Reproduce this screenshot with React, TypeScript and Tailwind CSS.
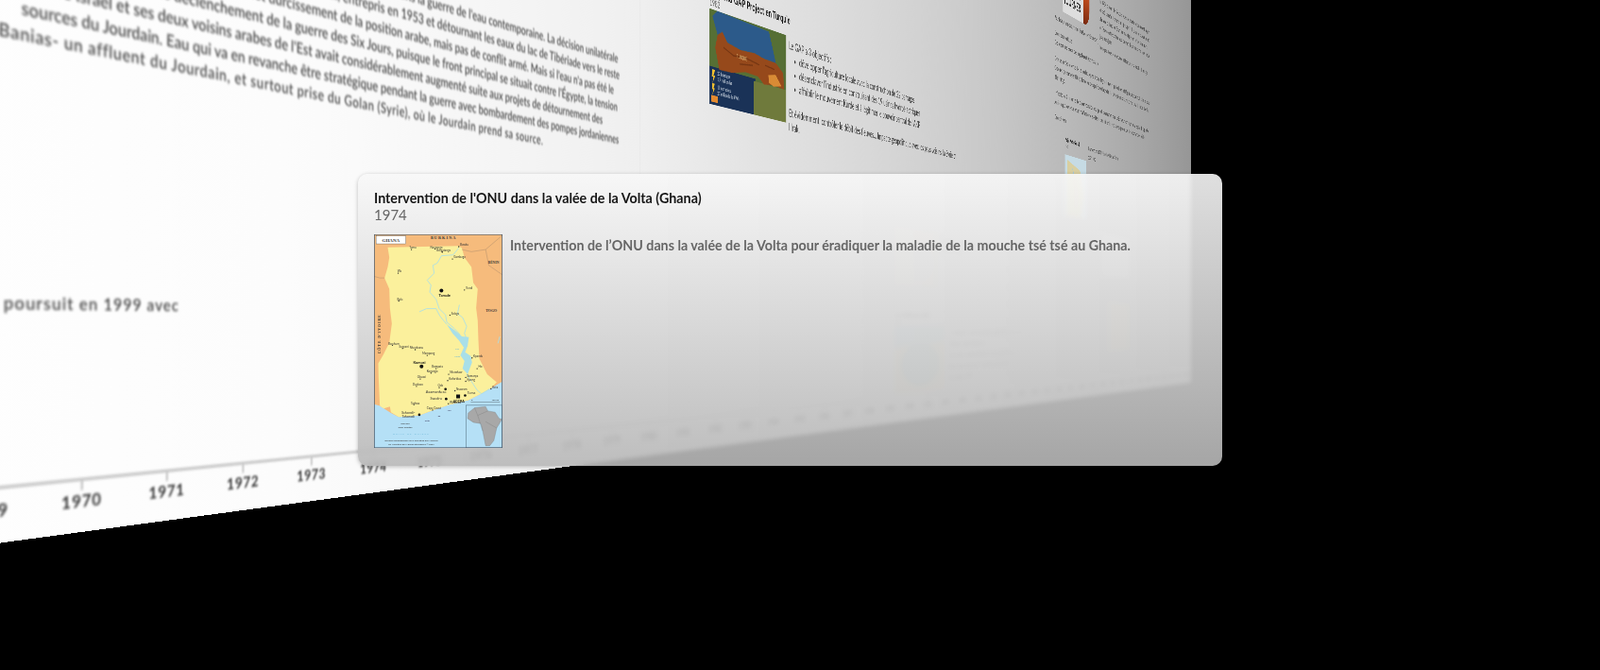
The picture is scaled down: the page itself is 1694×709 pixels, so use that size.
const WALL_W = 4379;
const WALL_H = 1430;

// wall corners on screen (top left, top right, bottom right, bottom left)
const corners = [
  [-412, -1608],
  [1261, -67],
  [1261, 405],
  [-412, 630],
];

function wallMatrix() {
  const [[x0, y0], [x1, y1], [x2, y2], [x3, y3]] = corners;
  const dx1 = x1 - x2;
  const dx2 = x3 - x2;
  const sx = x0 - x1 + x2 - x3;
  const dy1 = y1 - y2;
  const dy2 = y3 - y2;
  const sy = y0 - y1 + y2 - y3;
  const den = dx1 * dy2 - dx2 * dy1;
  const g = (sx * dy2 - dx2 * sy) / den;
  const h = (dx1 * sy - sx * dy1) / den;
  const a = x1 - x0 + g * x1;
  const b = x3 - x0 + h * x3;
  const d = y1 - y0 + g * y1;
  const e = y3 - y0 + h * y3;
  const m = [a / WALL_W, d / WALL_W, 0, g / WALL_W, b / WALL_H, e / WALL_H, 0, h / WALL_H, 0, 0, 1, 0, x0, y0, 0, 1];
  return `matrix3d(${m.join(',')})`;
}

const mainLines = [
  { text: "Le détournement du Jourdain par Israël marque un tournant dans la guerre de l'eau contemporaine. La décision unilatérale", pad: 'pr-[4px]' },
  { text: "d'Israël de construire son aqueduc national, entrepris en 1953 et détournant les eaux du lac de Tibériade vers le reste", pad: 'pr-0' },
  { text: "du pays, provoque un net durcissement de la position arabe, mais pas de conflit armé.  Mais si l'eau n'a pas été le", pad: 'pr-[13px]' },
  { text: "véritable déclenchement de la guerre des Six Jours, puisque le front principal se situait contre l'Égypte, la tension", pad: 'pr-[4px]' },
  { text: "entre Israël et ses deux voisins arabes de l'Est avait considérablement augmenté suite aux projets de détournement des", pad: 'pr-[38px]' },
  { text: "sources du Jourdain. Eau qui va en revanche être stratégique pendant la guerre avec bombardement des pompes jordaniennes", pad: 'pr-0' },
];

const years = Array.from({ length: 48 }, (_, i) => 1967 + i);

const towns: [number, number, string, number][] = [
  [150, 75, 'Tumu', 0],
  [225, 73, 'Navrongo', 0],
  [248, 83, 'Bolgatanga', 0],
  [300, 66, 'Bawku', 0],
  [280, 105, 'Gambaga', 0],
  [108, 150, 'Wa', 0],
  [318, 203, 'Yendi', 0],
  [110, 238, 'Bole', 0],
  [272, 283, 'Salaga', 0],
  [90, 378, 'Berekum', 0],
  [122, 388, 'Sunyani', 0],
  [162, 392, 'Nkenkaasu', 0],
  [200, 410, 'Mampong', 0],
  [228, 452, 'Bompata', 0],
  [212, 466, 'Konongo', 0],
  [268, 470, 'Nkawkaw', 0],
  [342, 418, 'Kpandu', 0],
  [358, 452, 'Ho', 0],
  [322, 480, 'Somanya', 0],
  [322, 492, 'Kpong', 0],
  [265, 490, 'Koforidua', 0],
  [178, 485, 'Obuasi', 0],
  [166, 508, 'Dunkwa', 0],
  [238, 512, 'Oda', 0],
  [288, 522, 'Nsawam', 0],
  [402, 516, 'Keta', 0],
  [217, 583, 'Cape Coast', 0],
  [158, 566, 'Tarkwa', 0],
  [267, 563, 'Winneba', 0],
];

function GhanaMap() {
  return (
    <svg viewBox="32 27 406 676" className="block h-[226px] w-[136px] shrink-0 blur-[0.35px]">
      <rect x="32" y="27" width="406" height="676" fill="#f6bb7c" />
      <path d="M32 565 50 570 85 592 110 605 175 600 215 585 270 566 330 552 370 532 400 515 438 493V703H32Z" fill="#b5e0f6" />
      <path
        d="M75 68 300 64 310 70 318 100 340 130 346 180 360 200 355 260 360 300 362 360 365 420 390 470 420 495 400 515 370 532 330 552 270 566 215 585 175 600 110 605 85 590 82 572 62 578 50 570 46 480 45 435 60 410 80 370 88 310 82 260 80 200 65 165 75 130 80 100Z"
        fill="#fbf09c"
      />
      <g fill="none" stroke="#b08f6c" strokeWidth="1.5">
        <path d="M310 75 340 82 385 75 438 30" />
        <path d="M385 75 395 125 438 155" />
        <path d="M32 160 50 165 65 165" />
      </g>
      <g fill="none" stroke="#a9dfe8" strokeWidth="2.5">
        <path d="M300 70 282 92 245 95 232 118 218 125 222 150 200 172 212 188 208 210 228 232 238 262 258 282 262 305 286 325 305 345" />
        <path d="M175 272 198 262 228 262 240 285 262 312" />
        <path d="M302 250 296 278 312 290 325 318 318 340 326 362" />
        <path d="M325 470 345 500 358 520 372 532 398 516" />
        <path d="M430 350 424 372" />
      </g>
      <path d="M262 312 286 330 310 350 332 352 328 380 320 400 338 412 342 432 328 470 312 452 318 428 305 410 316 385 300 362 280 340Z" fill="#a9dfe8" />
      <rect x="38" y="32" width="94" height="25" fill="#fff" stroke="#444" />
      <g fontFamily="'Liberation Serif', serif" fontWeight="700" fill="#333">
        <text x="85" y="50" textAnchor="middle" fontSize="15">GHANA</text>
        <text x="252" y="43" textAnchor="middle" fontSize="13" letterSpacing="3">BURKINA</text>
        <text x="410" y="119" textAnchor="middle" fontSize="11">BÉNIN</text>
        <text x="403" y="272" textAnchor="middle" fontSize="12">TOGO</text>
        <text x="0" y="0" fontSize="12" letterSpacing="2.5" transform="translate(54 405) rotate(-90)">CÔTE D'IVOIRE</text>
      </g>
      <g fontFamily="Lato, sans-serif" fill="#333" fontSize="9">
        {towns.map(([x, y, name]) => (
          <g key={name}>
            <circle cx={x} cy={y} r="2" fill="#222" />
            <text x={x + 4} y={y - 2} textAnchor={x > 250 ? 'start' : 'middle'}>{name}</text>
          </g>
        ))}
        <circle cx="245" cy="205" r="6" fill="#111" />
        <text x="255" y="223" textAnchor="middle" fontSize="12" fontWeight="700" fill="#111">Tamale</text>
        <circle cx="182" cy="445" r="6" fill="#111" />
        <text x="175" y="436" textAnchor="middle" fontSize="12" fontWeight="700" fill="#111">Kumasi</text>
        <circle cx="258" cy="517" r="4" fill="#111" />
        <text x="228" y="530" textAnchor="middle" fontSize="12">Asamankese</text>
        <circle cx="260" cy="548" r="4" fill="#111" />
        <text x="228" y="549" textAnchor="middle" fontSize="11">Swedru</text>
        <rect x="292" y="534" width="12" height="12" fill="#111" />
        <text x="300" y="560" textAnchor="middle" fontSize="11" fontWeight="700" fill="#111">ACCRA</text>
        <circle cx="320" cy="537" r="4" fill="#111" />
        <text x="340" y="532" textAnchor="middle" fontSize="11">Tema</text>
        <circle cx="175" cy="598" r="4" fill="#111" />
        <text x="140" y="594" textAnchor="middle" fontSize="11">Sekondi-</text>
        <text x="140" y="607" textAnchor="middle" fontSize="11">Takoradi</text>
        <text x="130" y="628" textAnchor="middle" fontSize="8">Cap des</text>
        <text x="130" y="640" textAnchor="middle" fontSize="8">Trois Pointes</text>
        <text x="200" y="618" textAnchor="middle" fontSize="8" fontStyle="italic" fill="#446">Côte</text>
        <text x="238" y="605" textAnchor="middle" fontSize="8" fontStyle="italic" fill="#446">de</text>
        <text x="270" y="585" textAnchor="middle" fontSize="8" fontStyle="italic" fill="#446">l'Or</text>
        <text x="150" y="662" textAnchor="middle" fontSize="8" letterSpacing="4" fill="#6fb7d6">Golfe de Guinée</text>
        <text x="295" y="392" textAnchor="middle" fontSize="8" fill="#6fb7d6">Lac</text>
        <text x="295" y="416" textAnchor="middle" fontSize="8" fill="#6fb7d6">Volta</text>
        <text x="150" y="683" textAnchor="middle" fontSize="7.5">Division Géographique de la Direction des Archives</text>
        <text x="150" y="694" textAnchor="middle" fontSize="7.5">du Ministère des Affaires Étrangères   © 2004</text>
        <text x="340" y="552" fontSize="7">0</text>
        <text x="404" y="552" fontSize="7">100 km</text>
      </g>
      <path d="M338 558H430" stroke="#333" strokeWidth="1" />
      <rect x="323" y="568" width="115" height="135" fill="#b5e0f6" stroke="#4c6477" strokeWidth="1.5" />
      <path
        d="M330 592 350 576 385 572 392 586 415 590 428 610 437 612 420 640 411 680 398 696 385 696 376 650 370 626 346 622 328 610Z"
        fill="#a8a8a8"
        stroke="#777"
      />
      <path d="M350 576 360 600 392 586M360 600 376 650M385 620 420 640" fill="none" stroke="#777" strokeWidth="1" />
      <rect x="32.5" y="27.5" width="405" height="675" fill="none" stroke="#46586a" strokeWidth="2.5" />
    </svg>
  );
}

function TurkeyMap() {
  return (
    <svg viewBox="0 0 240 143" className="block h-[143px] w-[240px] shrink-0 blur-[0.6px]">
      <rect width="240" height="143" fill="#566f35" />
      <path d="M22 0 182 4 205 51 166 50 136 46 92 48 52 43 37 29 23 36 8 10Z" fill="#2c5a8a" />
      <path d="M0 86H138L132 143H0Z" fill="#1a3257" />
      <path d="M132 90H240V143H132Z" fill="#6f7a3c" />
      <path d="M23 36 37 29 52 43 92 48 136 46 166 50 205 51 230 64 232 90 196 88 166 91 146 81 107 80 67 87 28 88 16 56Z" fill="#96491b" />
      <path d="M180 74 204 70 224 86 198 90 182 86Z" fill="#d98b35" />
      <path d="M40 52 70 60 110 58 150 62M90 70 130 66M170 60 200 62" fill="none" stroke="#753613" strokeWidth="2" />
      <path d="M8 90 16 90 11 99 16 99 8 111 11 101 6 101Z" fill="#f0c030" />
      <path d="M8 111 15 111 11 118 15 118 8 128 10 120 7 120Z" fill="#f0c030" />
      <rect x="4" y="129" width="20" height="10" fill="#e38a30" />
      <g fill="#cfd8e2" fontFamily="Lato, sans-serif" fontSize="7.5">
        <text x="22" y="97">22 barrages</text>
        <text x="22" y="106">1,7 million ha</text>
        <text x="22" y="118">19 centrales</text>
        <text x="22" y="127">27 milliards de kWh</text>
        <text x="80" y="62" fill="#f1d28a">TURQUIE</text>
      </g>
    </svg>
  );
}

function PaleMap({ className, tone, lake, sky }: { className: string; tone: string; lake: string; sky: string }) {
  return (
    <svg viewBox="0 0 100 100" preserveAspectRatio="none" className={className}>
      <rect width="100" height="100" fill={tone} />
      <ellipse cx="50" cy="58" rx="38" ry="33" fill={lake} />
      <path d="M0 0H100V22C70 30 30 26 0 34Z" fill={sky} />
    </svg>
  );
}

function Tiny({ children, w }: { children: string; w?: string }) {
  return <div className={`h-[23px] whitespace-nowrap leading-[23px] ${w ?? ''}`}>{children}</div>;
}

function Wall() {
  return (
    <div
      className="absolute left-0 top-0 flex h-[1430px] w-[4379px] origin-top-left flex-col overflow-hidden bg-[linear-gradient(90deg,#fff_0,#fcfcfc_591px,#efefef_1242px,#e3e3e3_1556px,#cfcfcf_2314px,#bcbcbc_3013px,#969696_4379px)] font-[Lato,sans-serif]"
      style={{ transform: wallMatrix() }}
    >
      <div className="flex h-[1382px] shrink-0">
        {/* main article */}
        <div className="h-full w-[1238px] shrink-0 border-r border-[#e4e4e4] pl-[170px] pr-[50px] pt-[873px] text-[16px] font-semibold leading-[22px] text-[#4a4a4a] blur-[1.1px]">
          <div className="origin-right rotate-[1.1deg]">
            {mainLines.map((line) => (
              <div key={line.text} className={`flex h-[22px] justify-end whitespace-nowrap ${line.pad}`}>
                {line.text}
              </div>
            ))}
            <div className="ml-[112px] h-[22px] whitespace-nowrap tracking-[0.65px]">
              Banias- un affluent du Jourdain, et surtout prise du Golan (Syrie), où le Jourdain prend sa source.
            </div>
          </div>
          <div className="ml-[93px] mt-[190px] h-[22px] whitespace-nowrap text-[16px] tracking-[1px]">se poursuit en 1999 avec</div>
        </div>

        {/* second column */}
        <div className="h-full w-[1612px] shrink-0 border-l border-[#e0e0e0] ml-[170px] pl-[14px] pt-[736px] text-[16.5px] leading-[23px] text-[#3c3c3c] blur-[0.5px]">
          <div className="h-[16px] whitespace-nowrap text-[17px] font-bold leading-[20px] text-[#111] tracking-[0.3px]">
            Le grand GAP Project en Turquie
          </div>
          <div className="h-[20px] text-[13px] leading-[20px] text-[#555]">1982</div>
          <div className="flex gap-[9px]">
            <TurkeyMap />
            <div className="w-[740px] pt-[4px]">
              <div className="whitespace-nowrap">Le GAP a 3 objectifs :</div>
              <ul className="ml-[36px] list-disc">
                <li className="whitespace-nowrap">développer l'agriculture locale avec la construction de 22 barrages</li>
                <li className="whitespace-nowrap">désenclaver l'industrie en construisant des 19 usines hydroélectriques</li>
                <li className="whitespace-nowrap">affaiblir le mouvement Kurde et à légitimer le pouvoir central de l'AKP</li>
              </ul>
              <div className="mt-[19px] whitespace-nowrap">
                Et évidemment, contrôler le débit des fleuves... Impacte géopolitique avec les pays voisins, la Syrie et
              </div>
              <div>l'Irak.</div>
            </div>
          </div>
          <div className="ml-[668px] mt-[125px] flex gap-[16px] opacity-40">
            <PaleMap className="h-[115px] w-[204px] shrink-0" tone="#e6e0c8" lake="#e2e2da" sky="#e6e0c8" />
            <div className="pt-[4px] text-[13px]">
              <Tiny>Vue aérienne du barrage et de son lac de retenue</Tiny>
              <Tiny>Construction achevée</Tiny>
            </div>
          </div>
          <div className="ml-[668px] mt-[43px] h-[20px] whitespace-nowrap text-[13px] font-bold leading-[20px] opacity-60">
            Les lacs de barrage au Sahel
          </div>
          <div className="ml-[668px] h-[12px] text-[11px] leading-[12px] opacity-60">1975</div>
          <div className="ml-[668px] flex gap-[16px] opacity-60">
            <PaleMap className="h-[128px] w-[244px] shrink-0" tone="#cfc8a4" lake="#8fb0ae" sky="#a6c0cc" />
            <div className="text-[13px] pt-[2px]">
              <Tiny>Le remplissage du lac modifie profondément le régime du fleuve et des crues</Tiny>
              <Tiny>Déplacement de milliers d'habitants</Tiny>
              <Tiny>Développement des cultures irriguées dans toute la vallée inférieure</Tiny>
              <Tiny>Rivalités entre les pays situés en amont et ceux situés en aval</Tiny>
              <Tiny>Accords signés en 1977</Tiny>
            </div>
          </div>
        </div>

        {/* third column */}
        <div className="h-full flex-1 pl-[3px] text-[15px] text-[#4c4c4c] blur-[0.5px]">
          <div className="flex">
            <div className="w-[370px] shrink-0 pt-[300px]">
              <div className="ml-[65px] flex h-[175px] w-[215px] overflow-hidden rounded-br-[40px]">
                <div className="flex-1 bg-[#ddd] p-[6px] text-[28px] font-black leading-[30px] text-[#222]">
                  LA GUERRE DE L'EAU EN 50 DATES DE TOURNER
                </div>
                <div className="w-[50px] bg-[linear-gradient(180deg,#222,#c9501e_55%,#7a2a10)]" />
              </div>
              <div className="mt-[12px]">
                <Tiny w="w-[360px] overflow-hidden">Pour l'eau, une ressource rare, la région entière est en jeu.</Tiny>
                <div className="mt-[14px]">
                  <Tiny>Enjeux économiques</Tiny>
                  <Tiny w="w-[360px] overflow-hidden">Des ressources en eau très inégalement réparties sur le territoire.</Tiny>
                </div>
              </div>
            </div>
            <div className="w-[560px] shrink-0 pt-[380px]">
              <Tiny w="w-[544px] overflow-hidden">En 1967, la guerre des Six Jours redessine la carte hydraulique de la région</Tiny>
              <Tiny w="w-[544px] overflow-hidden">et Israël contrôle désormais la majeure partie du bassin du Jourdain amont</Tiny>
              <Tiny w="w-[544px] overflow-hidden">ainsi que le plateau du Golan, où naissent plusieurs affluents importants</Tiny>
              <Tiny w="w-[544px] overflow-hidden">du fleuve, dont le débit ne cessera ensuite de diminuer année après année</Tiny>
              <Tiny>jusqu'à nos jours.</Tiny>
              <div className="mt-[6px]">
                <Tiny w="w-[544px] overflow-hidden">Les négociations de paix achoppent toujours sur la question du partage.</Tiny>
              </div>
            </div>
          </div>
          <div className="mt-[16px]">
            <Tiny w="w-[870px] overflow-hidden">Dans les années soixante-dix, de nombreux pays lancent de grands travaux qui bouleversent l'équilibre régional de la vallée et ses eaux.</Tiny>
            <Tiny w="w-[870px] overflow-hidden">Ces ouvrages permettent l'irrigation de vastes superficies et la production d'énergie, mais ils transforment aussi la vie des riverains.</Tiny>
            <Tiny>Bilan mitigé.</Tiny>
            <div className="mt-[14px]">
              <Tiny w="w-[870px] overflow-hidden">Il n'existe pas à ce jour de droit international de l'eau qui soit contraignant pour les États et reconnu par tous les pays de la planète.</Tiny>
              <Tiny w="w-[870px] overflow-hidden">Ainsi chaque pays situé en amont d'un fleuve est-il tenté d'en utiliser les eaux sans se préoccuper des besoins de ses voisins.</Tiny>
            </div>
            <div className="mt-[14px]">
              <Tiny>Enjeux à venir</Tiny>
            </div>
          </div>
          <div className="ml-[80px] mt-[27px] flex">
            <div className="w-[175px] shrink-0">
              <div className="whitespace-nowrap text-[13px] font-bold leading-[16px] text-[#111]">Projet Volta (Ghana)</div>
              <div className="h-[29px] text-[12px] leading-[16px]">1965</div>
              <svg viewBox="0 0 175 150" className="block h-[150px] w-[175px]">
                <rect width="175" height="150" fill="#c6dbe4" />
                <path d="M20 12 120 30 150 90 130 150H15Z" fill="#d9cfa0" />
                <path d="M60 30 92 80 88 130" stroke="#a8cbd6" strokeWidth="5" fill="none" />
              </svg>
            </div>
            <div className="ml-[15px] flex-1 text-[13px]">
              <Tiny w="w-[400px] overflow-hidden">Intervention de l'ONU dans la vallée de la Volta</Tiny>
              <Tiny>1974-2002</Tiny>
              <div className="ml-[125px] mt-[180px] h-[110px] w-[258px] bg-[#cfcfcf] opacity-60" />
              <div className="ml-[180px] mt-[70px] h-[130px] w-[203px] bg-[#d8cf9c] opacity-40" />
            </div>
          </div>
        </div>
      </div>

      {/* timeline */}
      <div className="flex shrink-0 border-t-[3px] border-[#c8c8c8] pl-[45px] blur-[1px]">
        {years.map((year) => (
          <div key={year} className="flex w-[90px] shrink-0 flex-col items-center text-[16px] font-bold leading-[18px] tracking-[0.8px] text-[#333]">
            <div className="h-[8px] w-[2px] bg-[#c0c0c0]" />
            <div>{year}</div>
          </div>
        ))}
      </div>
    </div>
  );
}

export default function App() {
  return (
    <div className="relative h-[709px] w-[1694px] overflow-hidden bg-black font-[Lato,sans-serif]">
      <Wall />
      <div className="absolute left-[379px] top-[184px] h-[309px] w-[915px] rounded-[10px] bg-gradient-to-b from-[#f8f8f8]/90 to-[#b8b8b8]/90 pl-[17px] pr-[16px] pt-[17px] shadow-[0_1px_4px_rgba(0,0,0,0.25)] backdrop-blur-[2px]">
        <div className="text-[14.3px] font-bold leading-[18px] text-[#151515]">
          Intervention de l'ONU dans la valée de la Volta (Ghana)
        </div>
        <div className="-mt-[1px] text-[15px] leading-[19px] text-[#666]">1974</div>
        <div className="mt-[11px] flex gap-[8px]">
          <GhanaMap />
          <div className="pt-[3px] text-[14.25px] font-bold leading-[18px] text-[#666]">
            Intervention de l’ONU dans la valée de la Volta pour éradiquer la maladie de la mouche tsé tsé au Ghana.
          </div>
        </div>
      </div>
    </div>
  );
}
